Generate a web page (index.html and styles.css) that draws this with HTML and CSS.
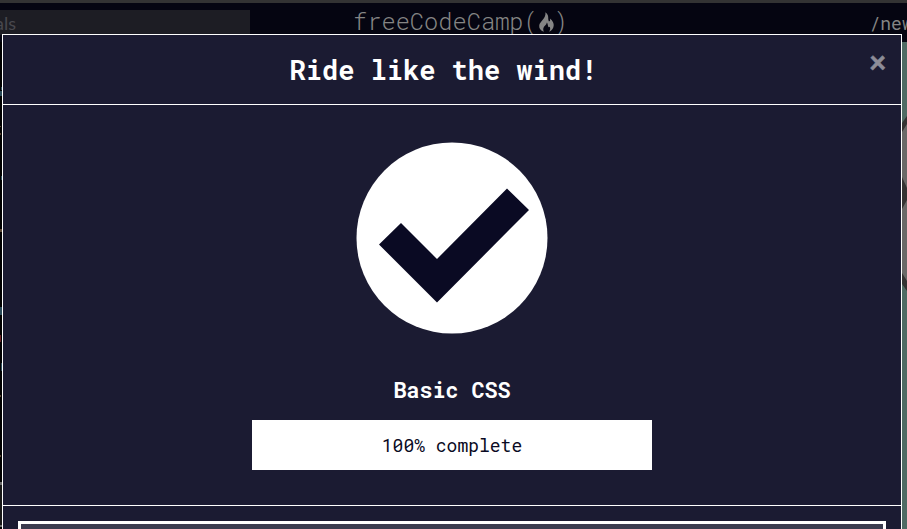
FILE: index.html
```html
<!DOCTYPE html>
<html lang="en">
<head>
<meta charset="utf-8">
<title>Basic CSS</title>
<link rel="stylesheet" href="styles.css">
</head>
<body>
<div class="page">
  <header class="nav">
    <div class="search">als</div>
    <div class="logo"><span>freeCodeCamp(</span><svg class="flame" viewBox="0 0 14 18"><path d="M6 0C10 3 7.8 6 9.3 8.5C10.6 8.5 10.5 7 10.2 5.8C13 8 14 10.5 13.7 12.5C13.4 15 12 17 9.5 18C10.5 16.5 10.8 15 10 13.5C9.5 14.2 8.7 14 8.5 13C8.2 11.5 8 10.5 7.4 9.5C7 12 4.5 12.5 4 15C3.8 16 4 17 4.5 18C1.5 17 0 15 .2 12.5C.5 8.5 6.8 6 6 0Z"/></svg><span>)</span></div>
    <div class="news">/new</div>
  </header>
  <main class="workspace">
    <svg class="code" viewBox="0 0 2 487"><path fill="#294957" d="M1 45h1v3H1zM0 49h2v5H0zM1 134h1v4H1zM0 265h2v8H0zM1 321h1v8H1z"/><path fill="#5c4735" d="M0 84h1v1H0zM0 91h1v2H0zM0 187h2v3H0zM0 353h1v2H0zM0 413h1v2H0z"/><path fill="#6b2025" d="M0 293h1v7H0z"/><path fill="#6b6b6b" d="M0 440h2v3H0zM0 483h2v2H0z"/><path fill="#181818" d="M0 443h2v40H0z"/></svg>
    <svg class="preview" viewBox="0 0 5 487"><path fill="#6b6968" d="M0 84 5 77V246L0 238Z"/><path fill="#353333" d="M0 81 5 74V82L0 90ZM0 135 5 146V158L0 167ZM0 231 5 239V249L0 242Z"/></svg>
  </main>
</div>
<section class="modal">
  <div class="modal-header"><h1>Ride like the wind!</h1><span class="close">×</span></div>
  <div class="modal-body">
    <svg class="check" viewBox="0 0 192 192"><circle cx="96" cy="96" r="95.5" fill="#fff"/><path fill="#0a0a23" d="M23 102.5 45 81l36 36 70-70.5L173 68l-92 92.5Z"/></svg>
    <h2>Basic CSS</h2>
    <div class="progress">100% complete</div>
  </div>
  <div class="modal-footer"><div class="submit"></div></div>
</section>
</body>
</html>
```
FILE: styles.css
```css
* { box-sizing: border-box; }
body { margin: 0; width: 907px; height: 529px; overflow: hidden; background: #000; }
h1, h2 { margin: 0; color: #fff; font-family: "Roboto Mono", "DejaVu Sans Mono", monospace; font-weight: 700; }
.page { height: 529px; border-top: 3px solid #333; }
.nav { display: grid; grid-template-columns: 250px 1fr 37.5px; height: 39px; background: #050511; font-size: 18px; }
.search { height: 25px; margin-top: 7px; background: #1d1d24; color: #48484e; font-family: Lato, sans-serif; line-height: 27px; text-indent: -5px; }
.logo { display: flex; padding-left: 103px; color: #858585; font: 350 23.7px/35px "Roboto Mono", monospace; }
.flame { width: 15px; height: 20px; margin: 9px 0 0 1px; fill: #858585; }
.news { overflow: hidden; color: #858585; font: 18px/41px "Roboto Mono", "DejaVu Sans Mono", monospace; white-space: nowrap; }
.workspace { display: flex; justify-content: space-between; height: 487px; }
.code { width: 2px; height: 487px; }
.preview { width: 5px; height: 487px; background: #506b64; }
.modal { position: absolute; left: 2px; top: 34px; width: 900px; height: 495px; overflow: hidden; border: 1px solid #fff; border-bottom: 0; background: #1b1b32; }
.modal-header { display: grid; grid-template-columns: 1fr 17px; padding: 0 15px; height: 70px; border-bottom: 1px solid #fff; }
.modal-header h1 { font-size: 27px; line-height: 70px; text-align: center; }
.close { color: #8d8d98; font: 900 30px/53px Lato, sans-serif; -webkit-text-stroke: .5px #8d8d98; }
.modal-body { display: flex; flex-direction: column; align-items: center; height: 401px; padding-top: 37px; border-bottom: 1px solid #fff; }
.check { width: 192px; height: 192px; }
.modal-body h2 { margin-top: 41px; font-size: 21.7px; line-height: 30px; }
.progress { width: 400px; height: 50px; margin-top: 15px; background: #fff; color: #0a0a23; font: 18px/50px "Roboto Mono", "DejaVu Sans Mono", monospace; text-align: center; }
.modal-footer { padding: 15px; }
.submit { height: 8px; border: 3px solid #fff; border-bottom: 0; background: #3b3b4f; }
```
